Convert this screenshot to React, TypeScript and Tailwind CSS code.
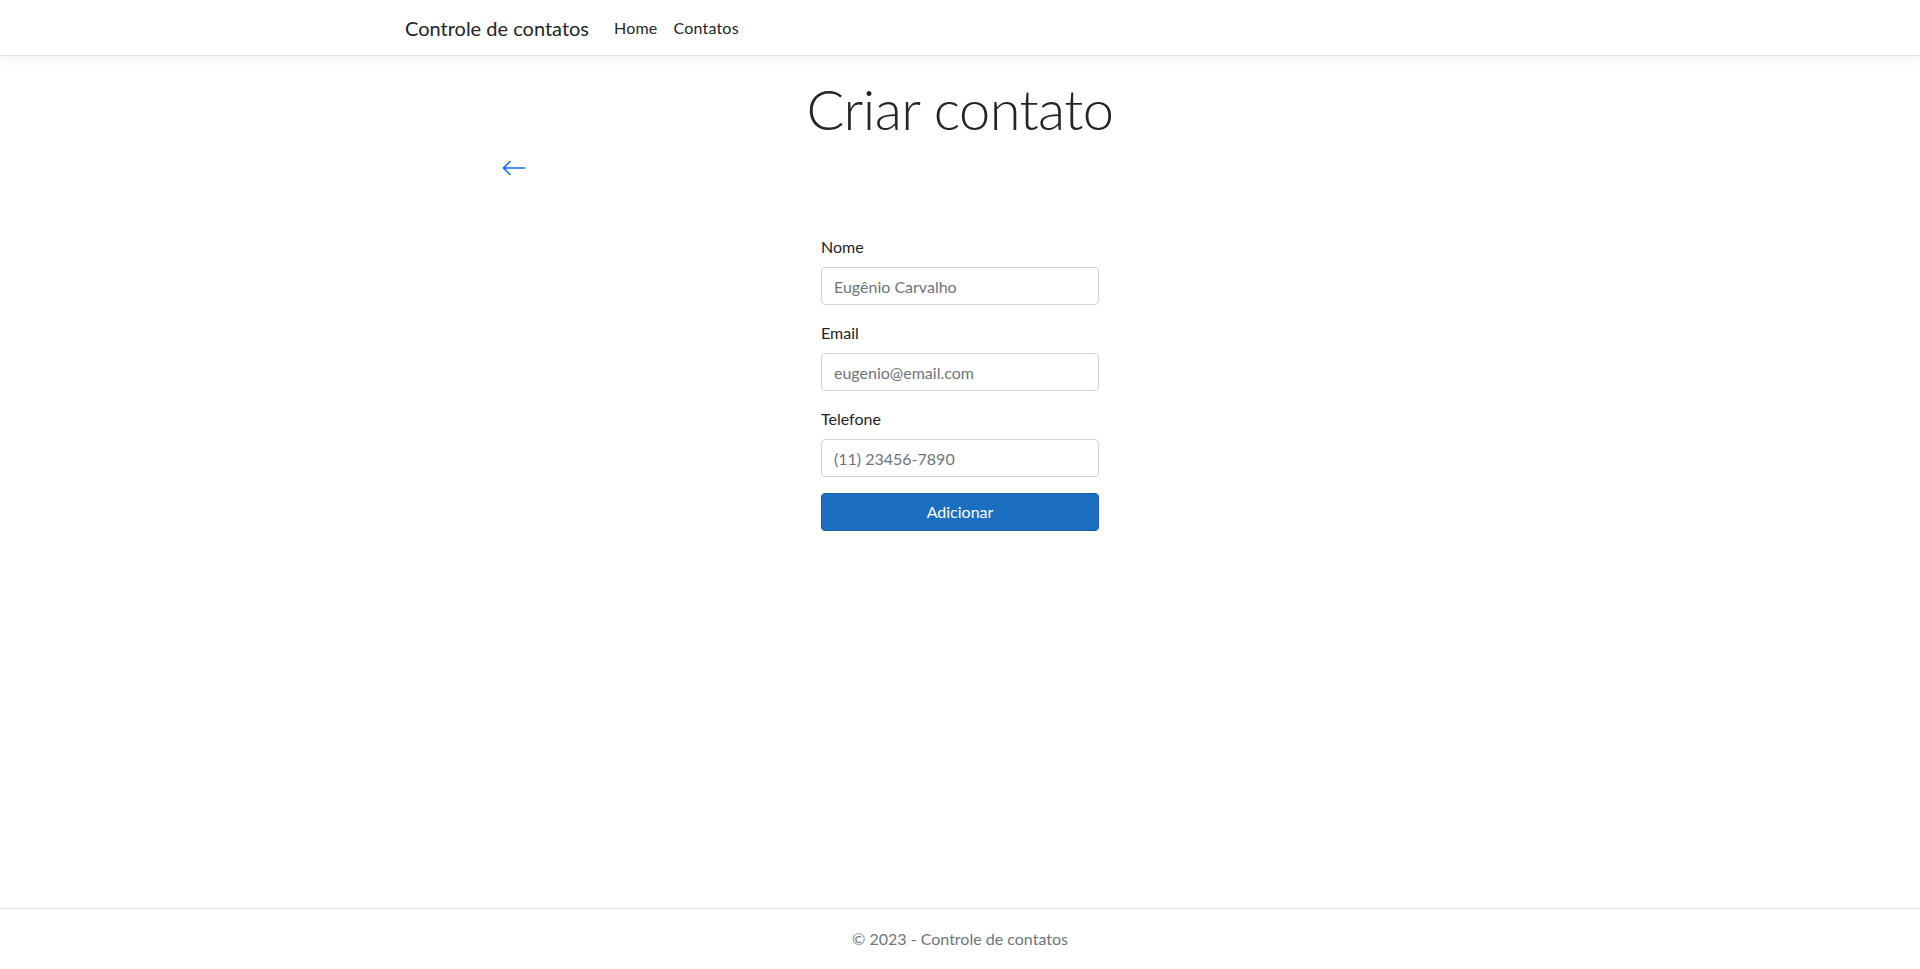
function ArrowLeft() {
  return (
    <svg width="26" height="26" viewBox="0 0 16 16" fill="currentColor" aria-hidden="true">
      <path
        fillRule="evenodd"
        d="M15 8a.5.5 0 0 0-.5-.5H2.707l3.147-3.146a.5.5 0 1 0-.708-.708l-4 4a.5.5 0 0 0 0 .708l4 4a.5.5 0 0 0 .708-.708L2.707 8.5H14.5A.5.5 0 0 0 15 8z"
      />
    </svg>
  );
}

function Field({ label, placeholder, type = 'text' }: { label: string; placeholder: string; type?: string }) {
  return (
    <div className="mb-4">
      <label className="block mb-2 text-[16px] leading-6 text-[#212529]">{label}</label>
      <input
        type={type}
        placeholder={placeholder}
        className="block w-full h-[38px] px-3 text-[16px] leading-6 text-[#212529] bg-white border border-[#ced4da] rounded-[4px] placeholder:text-[#6c757d] outline-none"
      />
    </div>
  );
}

export default function App() {
  return (
    <div
      className="min-h-screen flex flex-col bg-white text-[#212529] text-[16px] leading-6"
      style={{ fontFamily: 'Lato, "Noto Sans", sans-serif' }}
    >
      <header className="h-[56px] shrink-0 bg-white border-b border-[#dee2e6] shadow-[0_4px_12px_rgba(0,0,0,0.05)]">
        <nav className="w-[1140px] mx-auto px-[15px] h-full flex items-center">
          <a href="#" className="text-[20px] leading-[30px] text-[#212529] mr-[17px]">
            Controle de contatos
          </a>
          <a href="#" className="px-2 text-[16px] tracking-[0.2px] text-[#212529]">
            Home
          </a>
          <a href="#" className="px-2 text-[16px] tracking-[0.2px] text-[#212529]">
            Contatos
          </a>
        </nav>
      </header>

      <main className="flex-1">
        <div className="w-[1140px] mx-auto px-[15px]">
          <h1 className="mt-[19px] mb-2 text-center text-[56px] leading-[67px] font-light tracking-[-0.6px] text-[#212529]">
            Criar contato
          </h1>
          <div className="h-[36px] flex items-center pl-[96px]">
            <a href="#" className="text-[#0d6efd] flex items-center">
              <ArrowLeft />
            </a>
          </div>
          <form className="w-[278px] mx-auto mt-[49px]" onSubmit={(e) => e.preventDefault()}>
            <Field label="Nome" placeholder="Eugênio Carvalho" />
            <Field label="Email" placeholder="eugenio@email.com" type="email" />
            <Field label="Telefone" placeholder="(11) 23456-7890" />
            <button
              type="submit"
              className="block w-full h-[38px] bg-[#1b6ec2] border border-[#1861ac] rounded-[4px] text-white text-[16px] leading-6"
            >
              Adicionar
            </button>
          </form>
        </div>
      </main>

      <footer className="shrink-0 border-t border-[#dee2e6] h-[61px] leading-[60px] text-center text-[#6c757d] text-[16px]">
        © 2023 - Controle de contatos
      </footer>
    </div>
  );
}
